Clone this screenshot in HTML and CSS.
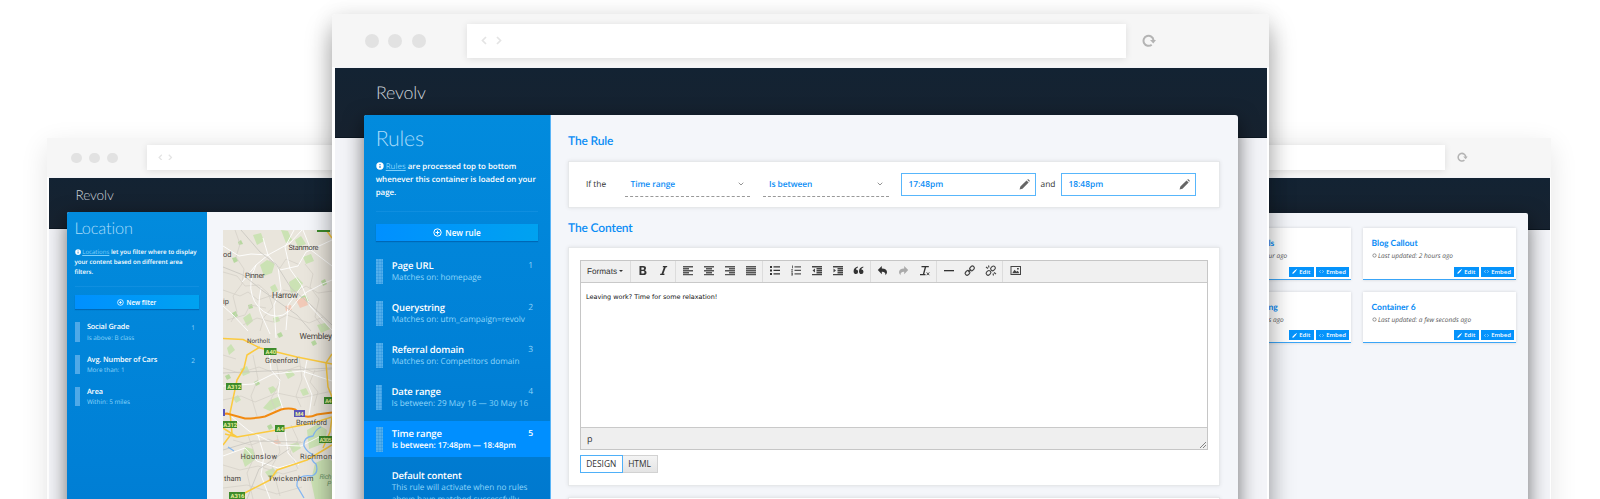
FILE: index.html
```html
<!DOCTYPE html>
<html lang="en">
<head>
<meta charset="utf-8">
<title>Revolv</title>
<link rel="stylesheet" href="styles.css">
</head>
<body>
<svg class="defs" width="0" height="0" aria-hidden="true">
  <symbol id="back" viewBox="0 0 6 9"><path d="M5 1 1.5 4.5 5 8" fill="none" stroke="currentColor" stroke-width="1.7"/></symbol>
  <symbol id="fwd" viewBox="0 0 6 9"><path d="M1 1l3.500 3.500L1 8" fill="none" stroke="currentColor" stroke-width="1.700"/></symbol>
  <symbol id="reload" viewBox="0 0 14 13"><path d="M9.700 10.700A5 5 0 1 1 11.500 6.300" fill="none" stroke="currentColor" stroke-width="2"/><path d="M8 6h6l-2.700 3.600z" fill="currentColor"/></symbol>
  <symbol id="info" viewBox="0 0 8 8"><circle cx="4" cy="4" r="3.700" fill="currentColor"/><path d="M4 2v1M4 3.700v2.200" stroke="#0580d8" stroke-width="1.100"/></symbol>
  <symbol id="plus" viewBox="0 0 9 9"><circle cx="4.500" cy="4.500" r="3.700" fill="none" stroke="currentColor" stroke-width="1"/><path d="M4.500 2.600v3.800M2.600 4.500h3.800" stroke="currentColor" stroke-width="1"/></symbol>
  <symbol id="chev" viewBox="0 0 6 4"><path d="M.7.7 3 3 5.300.7" fill="none" stroke="currentColor" stroke-width=".9"/></symbol>
  <symbol id="pencil" viewBox="0 0 12 12"><path d="M.6 11.400l.9-3.300L8.200 1.500l2.300 2.300-6.700 6.700zM9 .9l.6-.5q.5-.3 1 .1l1 1q.4.500 0 1l-.5.600z" fill="currentColor"/></symbol>
  <symbol id="clock" viewBox="0 0 6 6"><circle cx="3" cy="3" r="2" fill="none" stroke="currentColor" stroke-width=".7"/></symbol>
  <symbol id="code" viewBox="0 0 7 5"><path d="M2.200.8.6 2.500l1.600 1.700M4.800.8l1.600 1.700-1.600 1.700" fill="none" stroke="currentColor" stroke-width=".8"/></symbol>
</svg>

<main class="stage">

  <section class="window window-left">
    <header class="chrome">
      <div class="dots"><i></i><i></i><i></i></div>
      <div class="url"><svg><use href="#back"/></svg><svg><use href="#fwd"/></svg></div>
    </header>
    <nav class="nav">Revolv</nav>
    <div class="panel">
      <aside class="sidebar">
        <h1>Location</h1>
        <p class="intro"><svg><use href="#info"/></svg> <a>Locations</a> let you filter where to display<br>your content based on different area<br>filters.</p>
        <button class="add"><svg><use href="#plus"/></svg>New filter</button>
        <ul class="items">
          <li><b class="grip"></b><div><h3>Social Grade</h3><p>Is above: B class</p></div><em>1</em></li>
          <li><b class="grip"></b><div><h3>Avg. Number of Cars</h3><p>More than: 1</p></div><em>2</em></li>
          <li><b class="grip"></b><div><h3>Area</h3><p>Within: 5 miles</p></div></li>
        </ul>
      </aside>
      <div class="map-wrap">
        <svg class="map" viewBox="0 0 109 269">
          <rect width="109" height="269" fill="#e9e5dc"/>
          <g fill="#cbe2b4">
            <path d="M30 5l8-2 3 8-7 4zM58 0l7 1 4 9-6 3zM80 27l8-3 3 7-8 3zM37 35l7-5 8 3-3 10-8 3zM66 52l8-5 6 6-4 8-8 2zM20 88l7-5 3 8-6 5zM47 57l5-3 3 6-5 3zM72 10l6-4 5 8-8 3zM94 95l8-2 5 6-9 4zM50 88l5-2 2 5-6 2z"/>
            <path d="M4 118l4-4 4 6-6 5zM17 139l7-3 3 7-7 3zM62 143l6-3 4 5-7 4zM40 178l7-8 8-3 4 8-12 6zM22 217l8 2 3 10-11 8-3-9zM84 200l11-6 9 6-2 13-16 6zM66 215l9-3 3 6-8 5zM92 233l12-5 5 3v38H92l-4-18zM42 242l8-4 5 5-8 6zM10 168l5-3 3 5-5 3zM45 158l5-2 4 4-6 4zM77 160l6-2 3 6-6 2z"/>
          </g>
          <g fill="#b7d8a0"><path d="M9 28l4-1 2 4-4 2zM15 12l3-2 2 4-4 1zM77 67l6-2 3 6-7 2zM9 83l4-2 2 5-4 2zM98 51l4-2 2 5-4 2zM25 75l4-1 1 4-4 1zM54 104l4-2 2 4-4 2zM88 112l4-2 2 4-4 2zM2 146l4-2 2 4-4 2zM44 196l4-2 2 4-4 2zM31 152l4-2 2 4-4 2z"/></g>
          <path d="M73 70l9-3 3 8-8 3zM62 76l6-1 1 5-6 1zM50 211l5-2 3 4-6 2z" fill="#f1c9b7"/>
          <g fill="none" stroke="#d3cfc6" stroke-width=".7">
            <path d="M0 42l14 4 8 10 14-1 9 8 5 14-9 10-4 14M12 0l5 14-4 13 8 12-2 15-9 12 4 16-6 10M46 30l11 8 6-9 14 6M60 60l13 2 10-6 12 7 14-2M20 95l14-7 16 4 14-7 22 8 14-6M82 34l8 10-3 13 9 12-4 18 8 10M0 60l17 6 8-4 10 8 15-5M4 90l18-5 5-10 16 3"/>
            <path d="M0 138l16 5 20-6 18 7 22-8 14 6 19-3M30 125l5 24-7 17 6 20M53 130l4 22-9 17 5 12M76 126l3 23-6 17 5 11M0 170l18-4 14 6 22-9 24 5 31-7M10 210l18 5 17-6 20 8 15-5M25 205l7 20-8 18 6 26M54 205l3 17-8 14 8 30M0 235l17 5 18-4 25 8 14-4M0 258l24-3 30 9 25-7M68 195l7 15-8 12 8 17M0 125l13 4M92 140l-5 12 8 10-4 14"/>
          </g>
          <g fill="none" stroke="#fff" stroke-width=".9">
            <path d="M40 8l5 17 10 12 3 22-7 16 2 33M0 16l16 10 12-2 17 1 22-12 12-13M19 52l14-17 12-10M71 0l-9 17 5 22 12 17 8 20 22 24M38 58q-4 20 0 26l9 20M33 35q-8 18-4 30 4 14 18 20 14 5 24-10 8-12 19-16 10-6 19-9M0 76l9 8 16 17M57 40l18-4 8-14 26-12M80 0l8 20 21 16M79 56l-14 19-2 25"/>
            <path d="M0 156l30-2 20-10 29-3 30 10M46 121l2 19 9 10-2 14 5 15M84 130l-3 15 8 20-3 20M9 187l17 14 28 14 24 1 20-10M0 226l22-8 12 13 21 7 18-5M35 205l6 20-3 20 9 24M62 201l3 22 11 12"/>
          </g>
          <path d="M18 0l19 22 16 12 15 24 20 17 21 20M0 37l20 8 20 16 34 24 14 16M0 143l109-5M24 269l12-30 30-20M0 220l30-9 48 1" fill="none" stroke="#c8c5bf" stroke-width=".8"/>
          <path d="M98 197q-6 3-8 9-10 1-9 10 3 6 8 8-2 6 4 10 3 9-4 12-16-2-15 10l7 12M5 217l6 4" fill="none" stroke="#83b6f2" stroke-width="1.300"/>
          <g fill="none" stroke="#fbca3f" stroke-width="1.500" stroke-linejoin="round">
            <path d="M0 108.500l20 1 17 8.500 37 9 30 6 5 1M37 117l-13 8-3 13-7 12-7 33 2 20-9 12M0 198l14 9 40-7 36-7 19-6M14 207L2 204M14 267l33-17 7-10 30-10 20-12 5-3M109 124l-6 9 2 24 4 10M104 1l5 7M109 187l-2 15-7 16"/>
          </g>
          <path d="M0 184l4-.5 18 5q10 0 20-2l16-7q8-2 14 0l8 6q5 3 14-1l15-2" fill="none" stroke="#f28a10" stroke-width="2"/>
          <g fill="#3d8b2b"><path d="M94 0h13v2H94zM41 118h12.500v7H41zM3 153h15.500v7H3zM0 191h14v7H0zM52 195h9.500v7H52zM96 206h13v7H96zM101 167h8v7h-8zM6 262h16v7H6z"/></g>
          <path d="M71 180h11v7H71zM0 179h2v7H0z" fill="#5a55b8"/>
          <g class="shields">
            <text x="42.500" y="123.700">A40</text><text x="4.200" y="158.700">A312</text><text x="0.300" y="196.700">A312</text><text x="53.500" y="200.700">A4</text><text x="96.500" y="211.700" textLength="12">A305</text><text x="102" y="172.700" textLength="6.500">A4</text><text x="7.500" y="267.700">A316</text><text x="72.300" y="185.700">M4</text>
          </g>
          <g class="places">
            <text x="65.500" y="19.500" textLength="30">Stanmore</text><text x="0" y="27">od</text><text x="22" y="48" textLength="19.500">Pinner</text>
            <text x="49" y="68" textLength="26" class="big">Harrow</text><text x="0" y="74">ip</text><text x="24" y="112.700" textLength="23" class="small">Northolt</text>
            <text x="76.500" y="108.500" textLength="32.500" class="big">Wembley</text><text x="42" y="133" textLength="33">Greenford</text>
            <text x="73" y="194.500" textLength="31">Brentford</text><text x="17.500" y="228.500" textLength="36.500">Hounslow</text>
            <text x="77" y="228.500" textLength="32">Richmon</text><text x="45" y="250.500" textLength="45.500">Twickenham</text><text x="1" y="250.500">tham</text>
            <text x="96.500" y="249" class="park" textLength="12">Rich</text><text x="104" y="256" class="park">P</text>
          </g>
        </svg>
      </div>
    </div>
  </section>

  <section class="window window-right">
    <header class="chrome">
      <div class="url"></div>
      <svg class="reload"><use href="#reload"/></svg>
    </header>
    <nav class="nav"></nav>
    <div class="panel">
      <div class="cards">
        <article class="card card-cut"><h3>ls</h3><p>ur ago</p><footer><button><svg><use href="#pencil"/></svg>Edit</button><button><svg><use href="#code"/></svg>Embed</button></footer></article>
        <article class="card"><h3>Blog Callout</h3><p><svg><use href="#clock"/></svg>Last updated: 2 hours ago</p><footer><button><svg><use href="#pencil"/></svg>Edit</button><button><svg><use href="#code"/></svg>Embed</button></footer></article>
        <article class="card card-cut"><h3>ng</h3><p>s ago</p><footer><button><svg><use href="#pencil"/></svg>Edit</button><button><svg><use href="#code"/></svg>Embed</button></footer></article>
        <article class="card"><h3>Container 6</h3><p><svg><use href="#clock"/></svg>Last updated: a few seconds ago</p><footer><button><svg><use href="#pencil"/></svg>Edit</button><button><svg><use href="#code"/></svg>Embed</button></footer></article>
      </div>
    </div>
  </section>

  <section class="window window-main">
    <header class="chrome">
      <div class="dots"><i></i><i></i><i></i></div>
      <div class="url"><svg><use href="#back"/></svg><svg><use href="#fwd"/></svg></div>
      <svg class="reload"><use href="#reload"/></svg>
    </header>
    <nav class="nav">Revolv</nav>
    <div class="panel">
      <aside class="sidebar">
        <h1>Rules</h1>
        <p class="intro"><svg><use href="#info"/></svg> <a>Rules</a> are processed top to bottom<br>whenever this container is loaded on your<br>page.</p>
        <button class="add"><svg><use href="#plus"/></svg>New rule</button>
        <ul class="items">
          <li><b class="grip"></b><div><h3>Page URL</h3><p>Matches on: homepage</p></div><em>1</em></li>
          <li><b class="grip"></b><div><h3>Querystring</h3><p>Matches on: utm_campaign=revolv</p></div><em>2</em></li>
          <li><b class="grip"></b><div><h3>Referral domain</h3><p>Matches on: Competitors domain</p></div><em>3</em></li>
          <li><b class="grip"></b><div><h3>Date range</h3><p>Is between: 29 May 16 — 30 May 16</p></div><em>4</em></li>
          <li class="active"><b class="grip"></b><div><h3>Time range</h3><p>Is between: 17:48pm — 18:48pm</p></div><em>5</em></li>
          <li><b class="grip none"></b><div><h3>Default content</h3><p>This rule will activate when no rules<br>above have matched successfully.</p></div></li>
        </ul>
      </aside>
      <div class="content">
        <h2>The Rule</h2>
        <div class="box rule">
          <span class="if">If the</span>
          <div class="select">Time range<svg><use href="#chev"/></svg></div>
          <div class="select">Is between<svg><use href="#chev"/></svg></div>
          <div class="input">17:48pm<svg><use href="#pencil"/></svg></div>
          <span class="and">and</span>
          <div class="input">18:48pm<svg><use href="#pencil"/></svg></div>
        </div>
        <h2>The Content</h2>
        <div class="box editor-box">
          <div class="editor">
            <div class="toolbar">
              <div class="formats">Formats<i></i></div>
              <div class="group">
                <svg viewBox="0 0 21 21"><path d="M7.500 6h3.700q2.800 0 2.800 2.300 0 1.300-1.200 1.900 1.700.5 1.700 2.200 0 2.600-3.200 2.600H7.500zM9.400 7.400v2.300h1.400q1.300 0 1.300-1.200t-1.300-1.100zM9.400 11v2.600h1.700q1.400 0 1.400-1.300T11.100 11z" fill-rule="evenodd"/></svg>
                <svg viewBox="0 0 21 21"><path d="M10 6h4.300l-.3 1.200h-1.200l-2.400 6.600h1.200l-.3 1.200H7l.3-1.200h1.200l2.400-6.600H9.700z"/></svg>
              </div>
              <div class="group lines">
                <svg viewBox="0 0 21 21"><path d="M6 6h10v1.500H6zM6 8h6v1.500H6zM6 10h10v1.500H6zM6 12h6v1.500H6zM6 14h10v1.300H6z"/></svg>
                <svg viewBox="0 0 21 21"><path d="M6 6h10v1.500H6zM8 8h6v1.500H8zM6 10h10v1.500H6zM8 12h6v1.500H8zM6 14h10v1.300H6z"/></svg>
                <svg viewBox="0 0 21 21"><path d="M6 6h10v1.500H6zM10 8h6v1.500h-6zM6 10h10v1.500H6zM10 12h6v1.500h-6zM6 14h10v1.300H6z"/></svg>
                <svg viewBox="0 0 21 21"><path d="M6 6h10v1.500H6zM6 8h10v1.500H6zM6 10h10v1.500H6zM6 12h10v1.500H6zM6 14h10v1.300H6z"/></svg>
              </div>
              <div class="group">
                <svg viewBox="0 0 21 21"><path d="M6 6h2v2H6zM6 9.500h2v2H6zM6 13h2v2H6zM9.500 6.300H16v1.300H9.500zM9.500 9.800H16v1.300H9.500zM9.500 13.300H16v1.300H9.500z"/></svg>
                <svg viewBox="0 0 21 21"><path d="M7 5.500h.9v2.700H7zM6.200 9.300h1.700v.8L7 11h.9v.8H6.200V11l.9-.9h-.9zM6.200 12.600h1.700v3H6.200v-.8h1v-.4h-.8v-.6h.8v-.4h-1zM9.500 6.300H16v1.200H9.500zM9.500 9.800H16V11H9.500zM9.500 13.300H16v1.200H9.500z" fill="#555"/></svg>
                <svg viewBox="0 0 21 21"><path d="M6 6h10v1.600H6zM10.500 8H16v1.600h-5.500zM10.500 10H16v1.600h-5.500zM10.500 12H16v1.600h-5.500zM6 14h10v1.300H6zM9 8.500v4l-2.500-2z" fill="#444"/></svg>
                <svg viewBox="0 0 21 21"><path d="M6 6h10v1.600H6zM10.500 8H16v1.600h-5.500zM10.500 10H16v1.600h-5.500zM10.500 12H16v1.600h-5.500zM6 14h10v1.300H6zM6.500 8.500v4l2.500-2z" fill="#444"/></svg>
                <svg viewBox="0 0 21 21"><path d="M9.900 7.500Q8 8 7.900 9.500q2.200 0 2.200 2.200T8 14q-2.400 0-2.400-2.800 0-3.400 4.300-4.600zM15.300 7.500q-1.900.5-2 2 2.200 0 2.200 2.200T13.400 14q-2.400 0-2.400-2.800 0-3.400 4.300-4.600z"/></svg>
              </div>
              <div class="group">
                <svg viewBox="0 0 21 21"><path d="M9.800 6v2.600q5.300.2 5.200 3.700 0 1.600-1.600 3 .6-3.600-3.600-3.500v2.500L5.800 10z"/></svg>
                <svg viewBox="0 0 21 21"><path d="M11.200 6v2.600Q6 8.800 6 12.300q0 1.600 1.600 3-.6-3.600 3.600-3.500v2.500l4-4.300z" fill="#aaa"/></svg>
                <svg viewBox="0 0 21 21"><path d="M7.500 6h7.300v1.200h-2.700L10.300 14h1.200v1.200H6V14h2.900l1.800-6.800H7.500z"/><path d="M12.700 12.400l2.600 2.800M15.300 12.400l-2.600 2.800" stroke="#333" stroke-width=".9"/></svg>
              </div>
              <div class="group">
                <svg viewBox="0 0 21 21"><path d="M6 10h10v1.300H6z"/></svg>
                <svg viewBox="0 0 21 21"><g fill="none" stroke="#444" stroke-width="1.200"><rect x="10.500" y="6.500" width="5" height="3.800" rx="1.900" transform="rotate(-45 13 8.400)"/><rect x="6" y="11" width="5" height="3.800" rx="1.900" transform="rotate(-45 8.500 12.900)"/><path d="M9.300 12.100l2.800-2.800"/></g></svg>
                <svg viewBox="0 0 21 21"><g fill="none" stroke="#444" stroke-width="1.100"><rect x="10.500" y="6.500" width="5" height="3.800" rx="1.900" transform="rotate(-45 13 8.400)"/><rect x="6" y="11" width="5" height="3.800" rx="1.900" transform="rotate(-45 8.500 12.900)"/><path d="M6 7l2 1.500M8.500 5.500l.5 2M13 13.500l.5 2M14 12.500l2 1.500"/></g></svg>
              </div>
              <div class="group last">
                <svg viewBox="0 0 21 21"><path d="M5.500 6h10.500v9H5.500zM6.500 7v7h8.500V7zM7.200 13.300l2.300-3.500 2 2 1.300-1 1.500 2.500zM12 8h1.800v1.600H12z" fill-rule="evenodd" fill="#444"/></svg>
              </div>
            </div>
            <div class="text">Leaving work? Time for some relaxation!</div>
            <div class="status">p<svg viewBox="0 0 6 6"><path d="M0 6l6-6M3 6l3-3" stroke="#777" stroke-width=".9"/></svg></div>
          </div>
          <div class="tabs"><button class="on">DESIGN</button><button>HTML</button></div>
        </div>
        <div class="box next"></div>
      </div>
    </div>
  </section>
</main>
</body>
</html>
```

FILE: styles.css
```css
* { box-sizing: border-box; margin: 0; padding: 0; }
body { background: #fff; overflow: hidden; font-family: "Open Sans", sans-serif; text-rendering: geometricPrecision; }
.defs { position: absolute; }
button { border: 0; font: inherit; color: inherit; }
ul { list-style: none; }
em { font-style: normal; }
svg { display: block; flex: none; }

.stage { position: relative; height: 499px; overflow: hidden; }

/* Browser windows stacked on the stage; --u is the scale unit of each one */
.window { position: absolute; background: #f3f4f8; }
.window-main { --u: 1px; left: 332px; top: 14px; width: 937px; height: 520px; border-radius: 4px 4px 0 0; border: solid #fff; border-width: 0 2px 0 3px; box-shadow: 0 16px 26px rgba(0,0,0,.36), 0 0 22px rgba(0,0,0,.08); }
.window-left { --u: .768px; left: 47px; top: 138px; width: 400px; height: 420px; border-left: 2px solid #fff; box-shadow: 0 8px 26px rgba(0,0,0,.11); }
.window-right { --u: .768px; left: 1200px; top: 138px; width: 351px; height: 420px; border-right: 1px solid #fff; box-shadow: 0 8px 26px rgba(0,0,0,.11); }

.chrome { display: flex; align-items: center; background: #f6f6f6; }
.window-main .chrome { height: 53px; margin: 0 -2px 1px -3px; padding-left: 32.500px; border-radius: 4px 4px 0 0; }
.window-left .chrome { height: 39px; margin: 0 0 1px -2px; padding-left: 24px; }
.window-right .chrome { height: 39px; margin: 0 -1px 1px 0; }
.dots { display: flex; gap: calc(9.600 * var(--u)); }
.dots i { width: calc(14 * var(--u)); height: calc(14 * var(--u)); border-radius: 50%; background: #e2e2e2; }
.window-main .dots { padding-top: 1px; }
.window-left .dots { padding-top: 1px; }
.url { display: flex; align-items: center; gap: 9px; background: #fff; box-shadow: 0 1px 7px rgba(0,0,0,.1); color: #e4e4e4; }
.window-main .url { width: 659px; height: 34px; margin-left: 41px; padding: 0 0 1px 14px; }
.window-left .url { width: 260px; height: 25px; margin-left: 29.500px; padding: 0 0 1px 11px; gap: 5px; }
.window-right .url { width: 245px; height: 25px; }
.url svg { width: calc(6 * var(--u)); height: calc(9 * var(--u)); }
.reload { width: calc(14 * var(--u)); height: calc(13 * var(--u)); margin: 0 0 calc(1 * var(--u)) calc(16 * var(--u)); color: #b4b4b4; }

.nav { background: linear-gradient(#132333, #17222f); color: #cdd3da; font: 300 calc(17.800 * var(--u))/1.200 Lato, sans-serif; letter-spacing: calc(-.2 * var(--u)); border-bottom: 1px solid #0c1722; }
.window-main .nav { height: 70px; padding: 14px 0 0 41px; }
.window-left .nav { height: 51px; padding: 9px 0 0 26.500px; }
.window-right .nav { height: 52px; }

.panel { display: flex; height: 500px; background: #f4f6fa; border-radius: 2px 2px 0 0; box-shadow: 0 6px 20px rgba(0,0,0,.55); }
.window-main .panel { width: 874px; margin: -23px 0 0 29px; border-radius: 3px 3px 0 0; }
.window-left .panel { margin: -17px 0 0 18px; }
.window-right .panel { width: 328px; margin-top: -17px; justify-content: flex-end; }

.sidebar { flex: none; width: 187px; padding: calc(10.200 * var(--u)) 0 0; background: linear-gradient(#028bdd, #0080d6 50%, #0073c8); color: #fff; border-radius: 2px 0 0 0; --pad: 11.700px; --gutter: 9px; }
.window-left .sidebar { width: 139.500px; padding-top: 7.400px; --pad: 7.500px; --gutter: 7px; }
.window-main .sidebar { border-right: 1px solid #58b4f7; }
.sidebar h1 { padding-left: var(--pad); font: 300 calc(21.300 * var(--u))/calc(26 * var(--u)) Lato, sans-serif; letter-spacing: calc(-.2 * var(--u)); color: #a9dcfa; }
.intro { margin: calc(10.200 * var(--u)) var(--pad) 0; padding-bottom: calc(11 * var(--u)); border-bottom: 1px solid rgba(60,165,240,.25); font-size: calc(7.900 * var(--u)); font-weight: 600; line-height: calc(13 * var(--u)); white-space: nowrap; }
.window-left .intro { font-size: 6.100px; letter-spacing: -.01px; }
.intro svg { display: inline-block; width: calc(8 * var(--u)); height: calc(8 * var(--u)); vertical-align: calc(-1 * var(--u)); }
.intro a { color: #7fd0fb; text-decoration: underline; font-weight: 400; }
.add { display: flex; justify-content: center; align-items: center; gap: calc(3 * var(--u)); width: calc(100% - 2 * var(--pad)); height: calc(17.500 * var(--u)); margin: calc(11.600 * var(--u)) var(--pad) calc(12 * var(--u)); background: linear-gradient(90deg, #0090ff, #00a2f0); box-shadow: 0 1px 1px rgba(0,60,130,.4); font-size: calc(8.150 * var(--u)); font-weight: 600; }
.add svg { width: calc(9 * var(--u)); height: calc(9 * var(--u)); }
.items li { display: flex; align-items: flex-start; height: calc(35.500 * var(--u)); margin-bottom: calc(6.500 * var(--u)); padding: 0 calc(17 * var(--u)) 0 var(--pad); }
.window-left .items li { padding-right: 11.500px; }
.items div { flex: 1; padding-top: calc(6.900 * var(--u)); white-space: nowrap; }
.items h3 { font-size: calc(9.500 * var(--u)); font-weight: 600; letter-spacing: calc(-.13 * var(--u)); line-height: calc(12 * var(--u)); }
.items p { font-size: calc(8.230 * var(--u)); line-height: calc(11.700 * var(--u)); color: #8fd6fb; }
.items em { padding-top: calc(6.900 * var(--u)); font-size: calc(8.500 * var(--u)); line-height: calc(12 * var(--u)); color: #8fd4fa; }
.items .active { background: #008fff; }
.items .active em { color: #fff; font-weight: 600; }
.items .active p { color: #fff; font-weight: 600; font-size: 8.150px; letter-spacing: -.08px; }
.grip { width: calc(7 * var(--u)); height: calc(25 * var(--u)); margin: calc(5.500 * var(--u)) var(--gutter) 0 0; background: repeating-linear-gradient(#fff0 0 2px, rgba(0,120,215,.2) 2px 3px), repeating-linear-gradient(90deg, #fff0 0 2px, rgba(0,120,215,.2) 2px 3px), #52aeeb; }
.window-left .grip { background: #4fa9e8; }
.grip.none { visibility: hidden; }

.map-wrap { padding: 18px 0 0 16.500px; }
.map { width: 109px; height: 269px; }
.map text { font-family: Roboto, sans-serif; }
.places { font-size: 7.400px; fill: #4a4642; }
.places .big { font-size: 8.300px; }
.places .small { font-size: 6.300px; }
.places .park { font-style: italic; font-size: 6.800px; fill: #6b9467; }
.shields { font-size: 5.800px; font-weight: 700; }
.map .shields { fill: #e8ef9b; }

.cards { display: grid; grid-template-columns: 101px 153px; gap: 12px 12px; align-content: start; padding: 15px 12px 0 0; }
.card { height: 51.500px; padding: 10px 2px 0 8.500px; background: #fff; border-bottom: 1px solid #3aa5f7; box-shadow: 0 0 3px rgba(0,0,0,.14); }
.card h3 { font: 700 8.500px/11px Lato, sans-serif; color: #0a8cf5; }
.card p { display: flex; align-items: center; gap: 1.500px; margin-top: 1px; font-size: 6.500px; line-height: 11px; font-style: italic; color: #555; white-space: nowrap; }
.card p svg { width: 5px; height: 5px; }
.card footer { display: flex; justify-content: flex-end; gap: 2px; margin-top: 5.500px; color: #fff; }
.card button { display: flex; align-items: center; justify-content: center; gap: 2px; width: 25.500px; height: 10px; background: #0593fb; font-size: 5.900px; font-weight: 600; }
.card button + button { width: 33px; }
.card button svg { width: 5px; height: 5px; }
.card-cut { padding-left: 18.500px; }

.content { flex: 1; padding: 0 18px 0 17px; }
.content h2 { font: 600 12px/14px "Lato Semibold", Lato, sans-serif; letter-spacing: -.15px; color: #0b8df5; }
.content h2:first-child { margin-top: 18.500px; }
.box { background: #fff; border: 1px solid #e6e8ea; box-shadow: 0 0 4px rgba(0,0,0,.09); }
.rule { display: flex; align-items: center; height: 47px; margin: 13.500px 0 13px; padding-left: 17px; font-size: 8.400px; color: #333; }
.if { width: 38.500px; }
.select { display: flex; align-items: center; justify-content: space-between; width: 125.500px; height: 24px; margin-right: 13px; padding: 0 6px 0 6px; border-bottom: 1px dashed #999; font-weight: 600; letter-spacing: -.08px; color: #0b8df5; }
.select svg { width: 6px; height: 4px; color: #888; }
.input { display: flex; align-items: center; justify-content: space-between; width: 135px; height: 23px; padding: 0 5px 0 7px; border: 1px solid #58b6fb; font-weight: 600; color: #0b8df5; }
.select + .input { margin-left: -1px; }
.input svg { width: 11px; height: 11px; color: #666; }
.and { width: 25px; text-align: center; }

.editor-box { height: 238.500px; margin-top: 12px; padding: 11.500px 11px 0; }
.editor { height: 190px; display: flex; flex-direction: column; border: 1px solid #c6c6c6; }
.toolbar { display: flex; height: 22px; flex: none; background: #f0f0f0; border-bottom: 1px solid #c9c9c9; fill: #333; }
.formats { display: flex; align-items: center; justify-content: space-between; width: 50px; padding: 0 7px 0 6px; border-right: 1px solid #dcdcdc; font: 8.200px "Liberation Sans", sans-serif; color: #333; }
.formats i { border: 2px solid transparent; border-top-color: #333; border-bottom: 0; }
.group { display: flex; padding: 0 1px; border-right: 1px solid #dcdcdc; }
.group.last { border: 0; padding-left: 2px; }
.group svg { width: 21px; height: 21px; margin-top: -.5px; }
.lines { fill: #555; }
.text { flex: 1; padding: 9.500px 5px; font: 6.450px/10px "DejaVu Sans", sans-serif; color: #111; }
.status { display: flex; justify-content: space-between; align-items: center; height: 22px; padding: 0 1px 0 6px; background: #efefef; border-top: 1px solid #c9c9c9; font-size: 9px; color: #333; }
.status svg { width: 6px; height: 6px; align-self: flex-end; margin-bottom: 1px; }
.tabs { display: flex; margin-top: 5.500px; font-size: 8.400px; color: #333; }
.tabs button { width: 35px; height: 18px; padding-bottom: 1px; background: linear-gradient(#f4f4f4, #e4e4e4); border: 1px solid #d2d2d2; border-left: 0; }
.tabs .on { width: 42.500px; background: #fff; border: 1px solid #4fb0f8; }
.next { height: 40px; margin-top: 11px; }
```
